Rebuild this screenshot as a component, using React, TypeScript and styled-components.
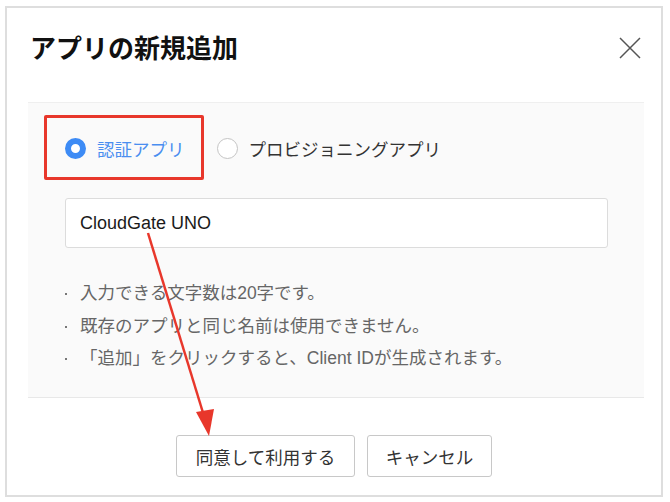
import { createGlobalStyle } from "styled-components";
import styled from "styled-components";

const GlobalStyle = createGlobalStyle`
  body {
    margin: 0;
    background: #fff;
    font-family: "Liberation Sans", "Noto Sans CJK JP", sans-serif;
  }
`;

const Frame = styled.div`
  position: relative;
  box-sizing: border-box;
  margin: 6px 0 0 5px;
  width: 658px;
  height: 491px;
  border: 2px solid #dedede;
  background: #fff;
  display: flex;
  flex-direction: column;
`;

const Header = styled.div`
  height: 94px;
  box-sizing: border-box;
  padding: 25px 20px 0 23px;
  display: flex;
  justify-content: space-between;
  align-items: flex-start;
`;

const Title = styled.h1`
  margin: 0;
  font-size: 26px;
  line-height: 32px;
  font-weight: 700;
  color: #111;
`;

const CloseButton = styled.button`
  border: 0;
  background: none;
  padding: 0;
  margin-top: 4px;
  width: 22px;
  height: 22px;
  cursor: pointer;
`;

const Panel = styled.div`
  margin: 0 17px 0 21px;
  height: 296px;
  box-sizing: border-box;
  background: #fafafa;
  border-top: 1px solid #efefef;
  border-bottom: 1px solid #e8e8e8;
  padding: 34px 0 0 37px;
`;

const RadioRow = styled.div`
  display: flex;
  align-items: center;
  height: 22px;
  gap: 32px;
`;

const RadioLabel = styled.label<{ $checked?: boolean }>`
  display: flex;
  align-items: center;
  gap: 11px;
  font-size: 17.5px;
  color: ${(p) => (p.$checked ? "#4a8ef0" : "#333")};
  cursor: pointer;
`;

const RadioDot = styled.span<{ $checked?: boolean }>`
  box-sizing: border-box;
  width: 21px;
  height: 21px;
  border-radius: 50%;
  background: #fff;
  border: ${(p) => (p.$checked ? "6.5px solid #3d8bf5" : "1.5px solid #c4c4c4")};
`;

const TextInput = styled.input`
  display: block;
  box-sizing: border-box;
  margin-top: 39px;
  width: 543px;
  height: 50px;
  border: 1px solid #dcdcdc;
  border-radius: 3px;
  background: #fff;
  padding: 0 14px;
  font-family: inherit;
  font-size: 18px;
  color: #1a1a1a;
  outline: none;
`;

const Notes = styled.ul`
  list-style: none;
  margin: 33px 0 0;
  padding: 0;
  display: flex;
  flex-direction: column;
  gap: 8px;
`;

const Note = styled.li`
  position: relative;
  padding-left: 15px;
  font-size: 17.5px;
  line-height: 24.5px;
  color: #666;

  &::before {
    content: "";
    position: absolute;
    left: 0;
    top: 12px;
    width: 2px;
    height: 2px;
    background: #777;
  }
`;

const Footer = styled.div`
  display: flex;
  justify-content: center;
  gap: 12px;
  padding-top: 37px;
`;

const Button = styled.button<{ $width: number }>`
  box-sizing: border-box;
  width: ${(p) => p.$width}px;
  height: 42px;
  background: #fff;
  border: 1px solid #c8c8c8;
  border-radius: 3px;
  font-family: inherit;
  font-size: 17.5px;
  color: #333;
  cursor: pointer;
`;

const Highlight = styled.div`
  position: absolute;
  left: 37px;
  top: 107px;
  width: 160px;
  height: 65px;
  box-sizing: border-box;
  border: 3px solid #e8372b;
  border-radius: 2px;
  pointer-events: none;
`;

const ArrowLayer = styled.svg`
  position: absolute;
  left: 0;
  top: 0;
  pointer-events: none;
`;

export default function App() {
  return (
    <>
      <GlobalStyle />
      <Frame>
        <Header>
          <Title>アプリの新規追加</Title>
          <CloseButton aria-label="閉じる">
            <svg width="22" height="22" viewBox="0 0 22 22">
              <path d="M1 1L21 21M21 1L1 21" stroke="#555" strokeWidth="1.5" />
            </svg>
          </CloseButton>
        </Header>
        <Panel>
          <RadioRow>
            <RadioLabel $checked>
              <RadioDot $checked />
              認証アプリ
            </RadioLabel>
            <RadioLabel>
              <RadioDot />
              プロビジョニングアプリ
            </RadioLabel>
          </RadioRow>
          <TextInput defaultValue="CloudGate UNO" />
          <Notes>
            <Note>入力できる文字数は20字です。</Note>
            <Note>既存のアプリと同じ名前は使用できません。</Note>
            <Note>「追加」をクリックすると、Client IDが生成されます。</Note>
          </Notes>
        </Panel>
        <Footer>
          <Button $width={179}>同意して利用する</Button>
          <Button $width={125}>キャンセル</Button>
        </Footer>
        <Highlight />
        <ArrowLayer width="658" height="491" viewBox="0 0 658 491">
          <line x1="141" y1="225" x2="197" y2="408" stroke="#e8372b" strokeWidth="2.5" />
          <polygon points="189,404 207,401 202,428" fill="#e8372b" />
        </ArrowLayer>
      </Frame>
    </>
  );
}
